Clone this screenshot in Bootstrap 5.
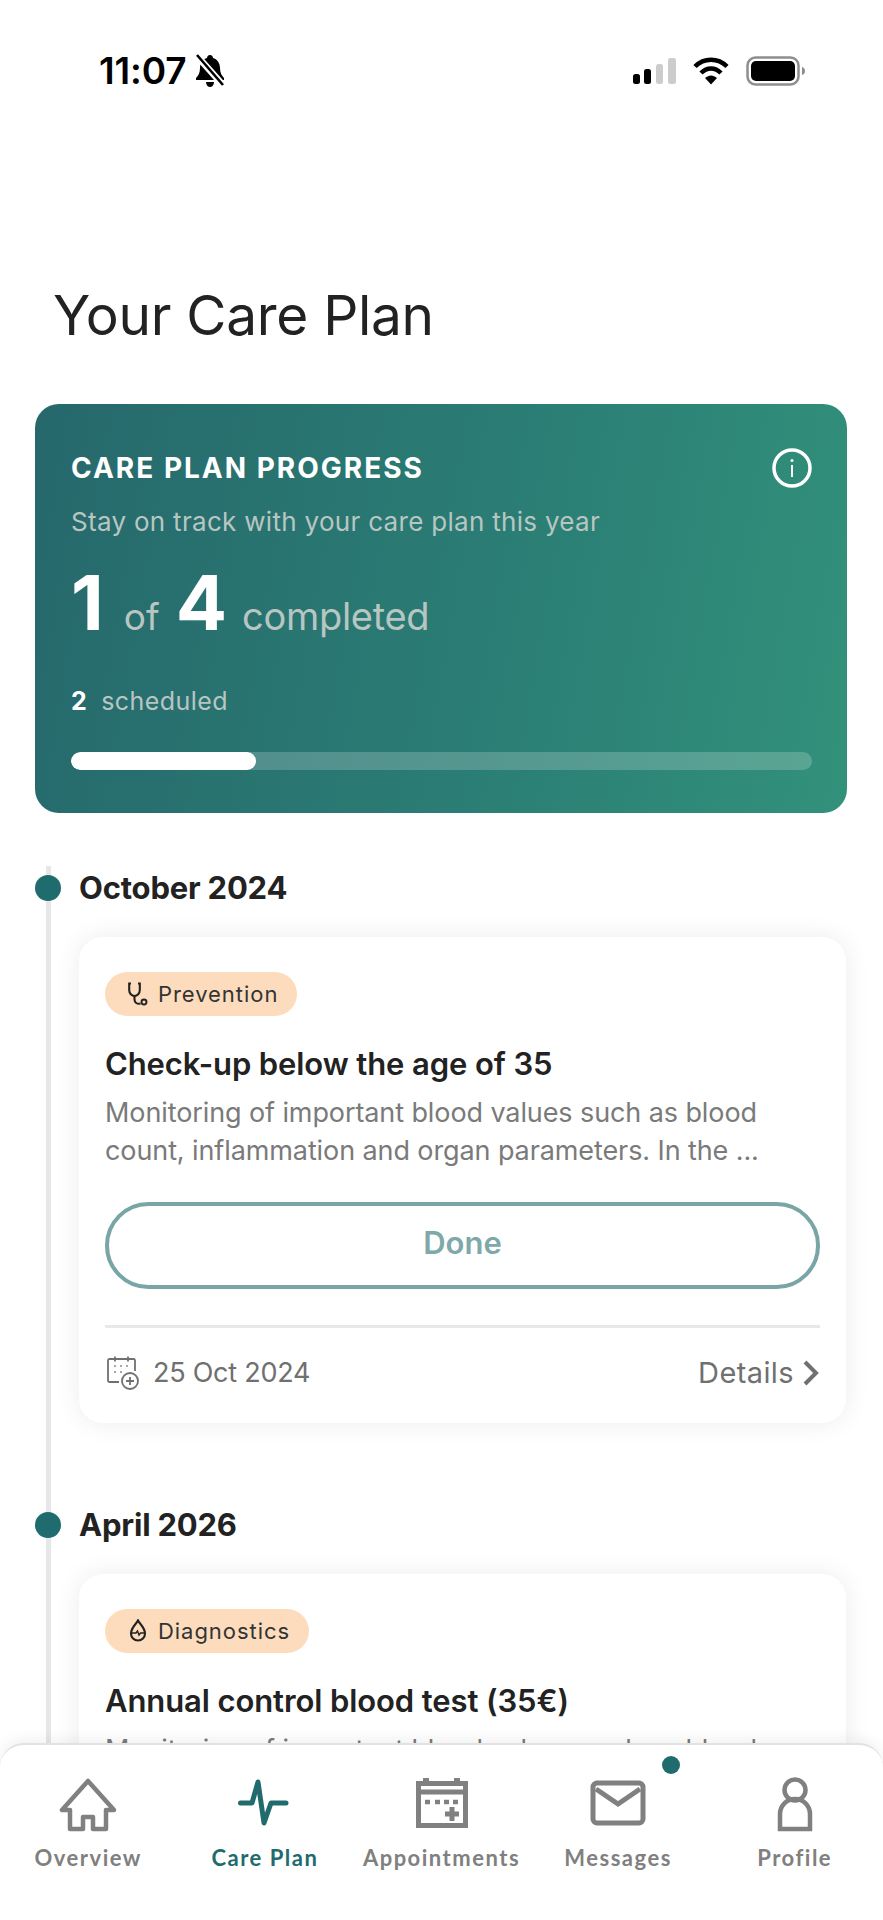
<!DOCTYPE html>
<html lang="en">
<head>
<meta charset="utf-8">
<title>Your Care Plan</title>
<link rel="stylesheet" href="https://cdn.jsdelivr.net/npm/bootstrap@5.3.0/dist/css/bootstrap.min.css">
<style>
html,body{margin:0;background:#fff}
body{font-family:"Inter","Liberation Sans",sans-serif;color:#222}
.phone{width:883px;height:1920px;overflow:hidden;position:relative;background:#fff}
.statusbar{height:104px;padding:49px 77px 0 99px}
.clock{font-size:37px;font-weight:600;line-height:44px;color:#000;letter-spacing:-.1px}
.status-right{margin-top:7px;column-gap:17px}
.page-title{font-size:55px;font-weight:400;line-height:64px;margin:179px 0 57px 53px;color:#222;letter-spacing:-.3px}
.progress-panel{margin:0 36px 0 35px;height:409px;border-radius:24px;padding:44px 35px 0 36px;color:#fff;background:linear-gradient(100deg,#26686c 0%,#2b7f75 60%,#32917b 100%)}
.panel-head{font-size:28px;font-weight:700;letter-spacing:2px;line-height:32px}
.panel-sub{font-size:26px;line-height:32px;margin-top:18px;color:#b8c6c2;letter-spacing:.3px}
.score{margin-top:22px;height:84px;line-height:84px;color:#b8c6c2;font-size:38px}
.score b{font-size:76px;font-weight:700;color:#fff}
.score-of{font-size:37px;margin:0 16px 0 20px}
.score-done{margin-left:15px;letter-spacing:-.3px}
.sched{font-size:25px;line-height:32px;margin-top:41px;color:#b8c6c2;letter-spacing:.45px}
.sched b{color:#fff;font-weight:700;margin-right:14px}
.prog-track{height:18px;margin-top:35px;background:rgba(255,255,255,.2);border-radius:9px}
.prog-track .progress-bar{background:#fff;border-radius:9px}
.timeline{position:relative;padding:53px 37px 0 35px}
.timeline-rail{position:absolute;left:46px;top:53px;width:5px;height:1000px;background:#e7e7e7}
.month{height:44px;position:relative}
.second-month{margin-top:80px}
.month-dot{width:26px;height:26px;border-radius:50%;background:#206b6e;flex:none}
.month-name{font-size:31px;font-weight:700;margin-left:18px;color:#222;letter-spacing:-.2px}
.plan-card{margin:27px 0 0 44px;height:486px;border:0;border-radius:24px;padding:35px 26px 0;background:#fff;box-shadow:0 0 26px rgba(0,0,0,.08)}
.tag{background:#fddcbd;color:#333;height:44px;padding:0 19px 0 23px;font-size:22px;font-weight:400;letter-spacing:.95px;align-self:flex-start;font-family:"Inter",sans-serif}
.tag svg{margin-right:10px}
.plan-title{font-size:31px;font-weight:600;line-height:38px;margin:29px 0 0;color:#222;letter-spacing:-.1px}
.plan-desc{font-size:27px;line-height:38px;color:#7a7a7a;margin:11px 0 0;letter-spacing:-.1px}
.done-btn{height:87px;margin-top:32px;border:4px solid #79a5a6;border-radius:44px;color:#7fa9a9;font-size:31px;font-weight:600;background:#fff;padding-top:2px;padding-bottom:6px}
.done-btn:disabled{opacity:1;color:#7fa9a9;border-color:#79a5a6}
.rule{height:3px;background:#e8e8e8;margin-top:36px}
.plan-foot{margin-top:23px;color:#707070;font-size:27px;line-height:44px;letter-spacing:-.25px}
.details-text{font-size:29px;letter-spacing:.4px}
.bottom-nav{position:absolute;left:0;right:0;top:1743px;height:177px;background:#fff;border-radius:24px 24px 0 0;border-top:2px solid #e2e2e2;box-shadow:0 -4px 14px rgba(0,0,0,.06)}
.nav-cell{position:relative;width:20%;text-align:center;color:#808080;font-family:"Lato","Inter",sans-serif;font-size:22px;font-weight:700;letter-spacing:1.5px;line-height:28px;padding-top:32px;text-decoration:none}
.nav-cell svg{display:block;margin:0 auto 11px}
.nav-cell.active{color:#206b6e}
.unread{position:absolute;width:18px;height:18px;border-radius:50%;background:#206b6e;left:132px;top:11px}
</style>
</head>
<body>
<div class="phone">
  <div class="statusbar d-flex justify-content-between align-items-start">
    <div class="d-flex align-items-center">
      <span class="clock">11:07</span>
      <svg class="ms-2" width="30" height="34" viewBox="0 0 30 34"><path d="M15 1c2 0 3 1.500 3 3 4 1 7 5 7 10 0 5 2 8 4 10v2H1v-2c2-2 4-5 4-10 0-5 3-9 7-10 0-1.500 1-3 3-3z" fill="#000"/><path d="M11 28h8c0 3-2 5-4 5s-4-2-4-5z" fill="#000"/><path d="M3 3l24 27" stroke="#fff" stroke-width="6.500"/><path d="M2 1l26 30" stroke="#000" stroke-width="2.600"/></svg>
    </div>
    <div class="status-right d-flex align-items-center">
      <svg width="44" height="27" viewBox="0 0 44 27"><rect x="1" y="16" width="7" height="10" rx="2.500" fill="#000"/><rect x="12" y="11" width="7" height="15" rx="2.500" fill="#000"/><rect x="24" y="6" width="7" height="20" rx="2.500" fill="#ccc"/><rect x="36" y="0" width="8" height="26" rx="2.500" fill="#ccc"/></svg>
      <svg width="36" height="28" viewBox="0 0 36 28"><path d="M2 9.500C11 .5 25 .5 34 9.500" fill="none" stroke="#000" stroke-width="4.500"/><path d="M8 16c6-6 14-6 20 0" fill="none" stroke="#000" stroke-width="4.500"/><path d="M12 21c4-3.500 8-3.500 12 0l-6 6.500z" fill="#000"/></svg>
      <svg width="60" height="30" viewBox="0 0 60 30"><rect x="1.500" y="1.500" width="51" height="27" rx="8" fill="none" stroke="#8e8e8e" stroke-width="2.500"/><rect x="5" y="5" width="44" height="20" rx="5" fill="#000"/><path d="M56 11c2 .5 3 2 3 4s-1 3.500-3 4z" fill="#8e8e8e"/></svg>
    </div>
  </div>

  <h1 class="page-title">Your Care Plan</h1>

  <div class="progress-panel">
    <div class="d-flex justify-content-between align-items-center">
      <div class="panel-head">CARE PLAN PROGRESS</div>
      <svg width="40" height="40" viewBox="0 0 40 40"><circle cx="20" cy="20" r="18" fill="none" stroke="#fff" stroke-width="3.500"/><path d="M20 17v12" stroke="#fff" stroke-width="2"/><circle cx="20" cy="12.500" r="1.500" fill="#fff"/></svg>
    </div>
    <div class="panel-sub">Stay on track with your care plan this year</div>
    <div class="score"><b>1</b><span class="score-of">of</span><b>4</b><span class="score-done">completed</span></div>
    <div class="sched"><b>2</b>scheduled</div>
    <div class="progress prog-track"><div class="progress-bar" style="width:25%"></div></div>
  </div>

  <div class="timeline">
    <div class="timeline-rail"></div>
    <div class="month d-flex align-items-center"><span class="month-dot"></span><span class="month-name">October 2024</span></div>
    <div class="card plan-card">
      <span class="badge rounded-pill tag d-inline-flex align-items-center">
        <svg width="20" height="24" viewBox="0 0 20 24"><path d="M3 1.500H1.200v6.500c0 3.500 2.500 6 5.300 6s5.300-2.500 5.300-6V1.500H10" fill="none" stroke="#222" stroke-width="2.100"/><path d="M6.500 14v3.500c0 3 2.500 5 6 4" fill="none" stroke="#222" stroke-width="2.100"/><circle cx="16" cy="20" r="2.500" fill="none" stroke="#222" stroke-width="1.900"/></svg>Prevention
      </span>
      <h2 class="plan-title">Check-up below the age of 35</h2>
      <p class="plan-desc">Monitoring of important blood values such as blood<br>count, inflammation and organ parameters. In the ...</p>
      <button class="btn done-btn" disabled>Done</button>
      <div class="rule"></div>
      <div class="plan-foot d-flex justify-content-between align-items-center">
        <div class="d-flex align-items-center">
          <svg class="ms-0 me-2" width="40" height="36" viewBox="0 0 40 36"><path d="M14 27H4.500a1.500 1.500 0 0 1-1.500-1.500V5.500A1.500 1.500 0 0 1 4.500 4h24A1.500 1.500 0 0 1 30 5.500V16" fill="none" stroke="#707070" stroke-width="1.800"/><path d="M10 1.500v5M23 1.500v5" stroke="#707070" stroke-width="1.800"/><path d="M9 11h2M15 11h2M21 11h2M9 17h2M15 17h2" stroke="#8a8a8a" stroke-width="1.600"/><circle cx="25" cy="26" r="8" fill="none" stroke="#707070" stroke-width="1.800"/><path d="M25 22v8M21 26h8" stroke="#707070" stroke-width="1.800"/></svg>
          <span>25 Oct 2024</span>
        </div>
        <div class="d-flex align-items-center">
          <span class="details-text">Details</span>
          <svg class="ms-2" width="18" height="26" viewBox="0 0 18 26"><path d="M3 2l11 11L3 24" fill="none" stroke="#707070" stroke-width="4"/></svg>
        </div>
      </div>
    </div>

    <div class="month d-flex align-items-center second-month"><span class="month-dot"></span><span class="month-name">April 2026</span></div>
    <div class="card plan-card">
      <span class="badge rounded-pill tag d-inline-flex align-items-center">
        <svg width="20" height="24" viewBox="0 0 20 24"><path d="M10 1.500c-1 2.500-7 7-7 13a7 7 0 0 0 14 0c0-6-6-10.500-7-13z" fill="none" stroke="#222" stroke-width="2.100"/><path d="M4 14h4l1.500-2 1.500 4 1.500-2h4" fill="none" stroke="#222" stroke-width="1.400"/></svg>Diagnostics
      </span>
      <h2 class="plan-title">Annual control blood test (35€)</h2>
      <p class="plan-desc">Monitoring of important blood values such as blood<br>count, inflammation and organ parameters. In the ...</p>
    </div>
  </div>

  <nav class="bottom-nav d-flex">
    <a class="nav-cell" href="#">
      <svg width="60" height="56" viewBox="0 0 60 56"><path d="M30 4L4 33h8v19h13V40h10v12h13V33h8z" fill="none" stroke="#808080" stroke-width="4.500" stroke-linejoin="round"/></svg>
      Overview
    </a>
    <a class="nav-cell active" href="#">
      <svg width="60" height="56" viewBox="0 0 60 56"><path d="M5.500 26H17l6-21 6 41 7-20h15" fill="none" stroke="#206b6e" stroke-width="5" stroke-linecap="round" stroke-linejoin="round"/></svg>
      Care Plan
    </a>
    <a class="nav-cell" href="#">
      <svg width="60" height="56" viewBox="0 0 60 56"><path d="M7.500 6.500h47v42h-47zM7.500 15h47" fill="none" stroke="#808080" stroke-width="5"/><path d="M15 1v8M46 1v8" stroke="#808080" stroke-width="6"/><path d="M14 25h5M24 25h5M33 25h5M42 25h5" stroke="#808080" stroke-width="4.500"/><path d="M41 30v14M34 37h14" stroke="#808080" stroke-width="5"/></svg>
      Appointments
    </a>
    <a class="nav-cell" href="#">
      <span class="unread"></span>
      <svg width="60" height="56" viewBox="0 0 60 56"><rect x="5" y="6" width="50" height="40" rx="4" fill="none" stroke="#808080" stroke-width="5"/><path d="M8 12l22 15 22-15" fill="none" stroke="#808080" stroke-width="5"/></svg>
      Messages
    </a>
    <a class="nav-cell" href="#">
      <svg width="60" height="56" viewBox="0 0 60 56"><circle cx="30" cy="13" r="10.500" fill="none" stroke="#808080" stroke-width="4.500"/><path d="M15 52V37a15 15 0 0 1 30 0v15z" fill="none" stroke="#808080" stroke-width="4.500"/></svg>
      Profile
    </a>
  </nav>
</div>
</body>
</html>
